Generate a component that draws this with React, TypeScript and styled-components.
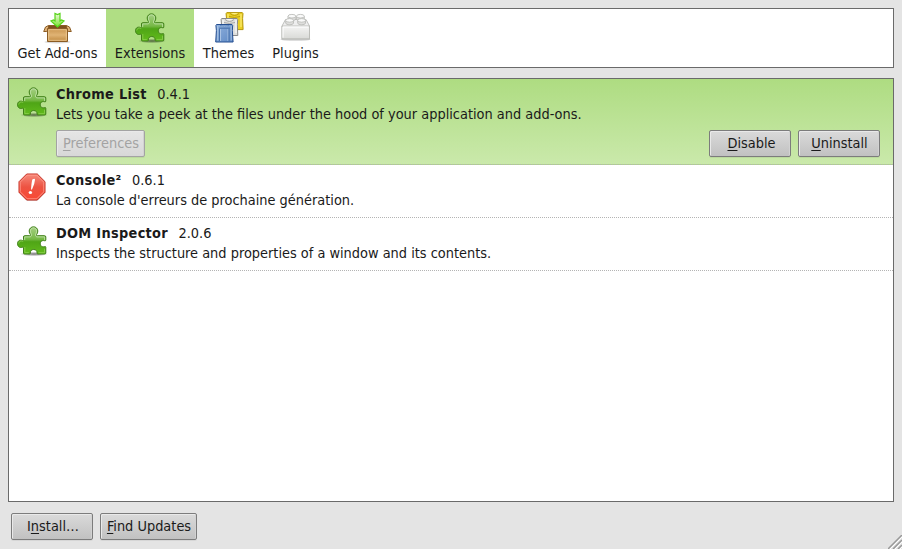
import React from "react";
import styled, { createGlobalStyle, css } from "styled-components";

const Global = createGlobalStyle`
  * { box-sizing: border-box; }
  body { margin: 0; background: #e4e4e4; }
  #root { height: 100vh; overflow: hidden; }
`;

const Window = styled.main`
  height: 100%;
  position: relative;
  display: flex;
  flex-direction: column;
  padding: 8px 8px 0;
  background: #e4e4e4;
  color: #1a1a1a;
  font: 14.4px/20px "DejaVu Sans Condensed", "DejaVu Sans", sans-serif;
  font-stretch: condensed;
  white-space: nowrap;
`;

const Toolbar = styled.nav`
  display: flex;
  height: 60px;
  border: 1px solid #6a6a6a;
  background: #fff;
`;

const Tab = styled.button<{ $width: number; $active?: boolean }>`
  display: flex;
  flex-direction: column;
  align-items: center;
  width: ${(p) => p.$width}px;
  padding: 3px 0 0;
  border: 0;
  background: ${(p) => (p.$active ? "#b0de84" : "transparent")};
  color: inherit;
  font: inherit;
  svg { display: block; flex: none; margin-bottom: -1px; }
`;

const List = styled.section`
  height: 424px;
  margin: 10px 0;
  border: 1px solid #6a6a6a;
  background: #fff;
`;

const Row = styled.article<{ $selected?: boolean }>`
  display: flex;
  height: ${(p) => (p.$selected ? 86 : 53)}px;
  padding: 5px 13px 0 7px;
  border-bottom: 1px dotted #b4b4b4;
  ${(p) =>
    p.$selected &&
    css`
      background: linear-gradient(#aedc81, #cae9ab);
    `}
`;

const RowIcon = styled.div`
  width: 40px;
  padding-top: 2px;
  svg { display: block; }
`;

const Details = styled.div`
  flex: 1;
`;

const Title = styled.div`
  display: flex;
  gap: 10.5px;
`;

const Name = styled.strong`
  font-weight: bold;
  letter-spacing: 0.3px;
`;

const Actions = styled.div`
  display: flex;
  gap: 7px;
  margin-top: 6px;
`;

const Spacer = styled.span`
  flex: 1;
`;

const Button = styled.button<{ $width: number; $indent?: number }>`
  width: ${(p) => p.$width}px;
  height: 27px;
  padding: 0 0 1px ${(p) => p.$indent ?? 0}px;
  border: 1px solid #7c7c7c;
  border-radius: 2px;
  background: linear-gradient(#dadada, #c1c1c1);
  box-shadow: inset 1px 1px #e9e9e9, inset -1px 0 #d2d2d2, 0 1px rgba(0, 0, 0, 0.06);
  color: #1a1a1a;
  font: inherit;
  text-align: center;
  &:disabled {
    border-color: #a3a3a3;
    background: linear-gradient(#e5e5e5, #d8d8d8);
    color: #a3a3a3;
  }
`;

const Key = styled.span`
  text-decoration: underline;
  text-decoration-thickness: 1px;
  text-underline-offset: 2px;
  text-decoration-skip-ink: none;
`;

const Footer = styled.footer`
  display: flex;
  gap: 7px;
  padding: 1px 3px;
`;

const Grip = styled.svg`
  position: absolute;
  right: 0;
  bottom: 0;
`;

const piece =
  "M7.500 12q0-1.300 1-1.300h5q1.300 0 .9-1.200c-.8-1-1.200-2.200-1.200-3.500a4.300 4.200 0 0 1 8.600 0c0 1.300-.4 2.500-1.200 3.500q-.4 1.200.9 1.200H28.500q1.300 0 1.300 1.300V15q0 1-1 .8c-1.500-.6-4.500-.3-4.500 2.900s3 3.500 4.500 2.900q1-.2 1 .8V28q0 1-1.300 1h-6.600q-1 0-.8-1c0-2-1-3.500-3.400-3.500s-3.400 1.500-3.400 3.500q.2 1-.8 1H8.500q-1 0-1-1v-5q0-1-1-.8c-2.500 1-5-.5-5-3.500s2.500-4.200 5-3.200q1 .2 1-.8z";

function Puzzle({ id }: { id: string }) {
  return (
    <svg width="32" height="32" viewBox="0 0 32 32">
      <defs>
        <linearGradient id={id} x1="0" y1="0" x2="0" y2="1">
          <stop offset="0" stopColor="#a5cf83" />
          <stop offset=".45" stopColor="#77b947" />
          <stop offset=".55" stopColor="#4fa516" />
          <stop offset="1" stopColor="#62bb1c" />
        </linearGradient>
        <radialGradient id={id + "s"}>
          <stop offset="0" stopColor="#000" stopOpacity=".55" />
          <stop offset="1" stopColor="#000" stopOpacity="0" />
        </radialGradient>
      </defs>
      <ellipse cx="18" cy="29" rx="14" ry="2.300" fill={`url(#${id}s)`} />
      <path d={piece} fill={`url(#${id})`} stroke="#3f7f18" />
      <path d="M8.700 15v-3.100h5.500q2-.8 1.100-2.900C13.500 6 14.700 2.900 17.500 2.900s4 3.100 2.200 6.100q-.9 2.100 1.100 2.900h7.800V15" fill="none" stroke="#cae7b4" strokeWidth=".9" opacity=".85" />
      <path d="M2.700 18.500c.2-2 2-3 4.500-2.200M8.800 22v5.600h4M22.500 27.700h6v-4" fill="none" stroke="#8dd052" strokeWidth=".8" />
    </svg>
  );
}

function BoxIcon() {
  return (
    <svg width="32" height="32" viewBox="0 0 32 32">
      <defs>
        <linearGradient id="box" x1="0" y1="0" x2="0" y2="1">
          <stop stopColor="#c8934e" />
          <stop offset=".5" stopColor="#e0b374" />
          <stop offset="1" stopColor="#bd873e" />
        </linearGradient>
        <linearGradient id="arrow" x1="0" y1="0" x2="0" y2="1">
          <stop stopColor="#effbdc" />
          <stop offset="1" stopColor="#76e32d" />
        </linearGradient>
      </defs>
      <ellipse cx="15.500" cy="30" rx="13" ry="1.500" fill="#000" opacity=".15" />
      <path d="m6.500 13.500-3 1.500-1.800 4.500h3L6.500 17m18-3.500 3 1.500 1.800 4.500h-3L24.500 17" fill="#dfb077" stroke="#8b5c24" />
      <path d="M6.500 13.500h18v4h-18z" fill="#7d5021" stroke="#8b5c24" />
      <path d="M5.500 16.500h20v13h-20z" fill="url(#box)" stroke="#8b5c24" />
      <path d="M6.700 28.300V17.700h17.600v10.600z" fill="none" stroke="#edcc97" strokeWidth=".8" />
      <path d="M13 1.500v7.500l-1.500-1L9 9l6.500 6L22 9l-2.500-1-1.500 1V1.500l-2.500 1z" fill="url(#arrow)" stroke="#55d317" strokeWidth="1.200" />
    </svg>
  );
}

function ThemesIcon() {
  return (
    <svg width="32" height="32" viewBox="0 0 32 32">
      <defs>
        <linearGradient id="blue" x1="0" y1="0" x2="1" y2="1">
          <stop stopColor="#90b1dc" />
          <stop offset="1" stopColor="#5e89c5" />
        </linearGradient>
      </defs>
      <path d="M13.800.6h15.500l.7 1-.4 5 .5 11H13l.5-11-.4-5z" fill="#ebd023" stroke="#b5960b" />
      <path d="M15 2v13m13-13v13" stroke="#fff184" />
      <path d="M17 1.500q4.500 4 9 0M16 4.500q5.500 2 11 0" fill="none" stroke="#b5960b" strokeWidth=".8" />
      <path d="M18 1.300h7q-3.500 2-7 0" fill="#fff7ac" />
      <path d="M8.700 6.500H24l.7 1-.4 5 .5 11H8l.5-11-.4-5z" fill="#dededc" stroke="#898989" />
      <path d="M10 8v13M23 8v13" stroke="#fff" />
      <path d="M12 7.500q4.500 4 9 0M11 10.500q5.500 2 11 0" fill="none" stroke="#999" strokeWidth=".8" />
      <path d="M13 7.300h7q-3.500 2-7 0" fill="#fff" />
      <path d="M3.500 12.500H19l.7 1-.4 5 .8 11.500H2.700l.7-11.500-.5-5z" fill="url(#blue)" stroke="#254f91" />
      <path d="M4.700 14v14.500m13.500-14.500v14.500M7.500 17v12M15 17v12" fill="none" stroke="#b6cde9" strokeWidth=".8" />
      <path d="M6 16.200h11M6.500 17v12M16 17v12" fill="none" stroke="#37629f" strokeWidth=".8" />
      <path d="M7 13.500h9q-4.500 2.500-9 0" fill="#b6cde9" stroke="#557fb8" strokeWidth=".5" />
    </svg>
  );
}

function PluginIcon() {
  return (
    <svg width="32" height="32" viewBox="0 0 32 32">
      <defs>
        <linearGradient id="brick" x1="0" y1="0" x2="0" y2="1">
          <stop stopColor="#f4f4f3" />
          <stop offset="1" stopColor="#d9dad7" />
        </linearGradient>
      </defs>
      <ellipse cx="15.500" cy="27.500" rx="15" ry="1.300" fill="#000" opacity=".18" />
      <path d="M5.500 7.500 2 14v13h27.500V14L26 7.500z" fill="#eee" stroke="#b8b9b5" strokeWidth=".9" />
      <path d="M2 14h27.500v12.800H2z" fill="url(#brick)" stroke="#b9bab6" strokeWidth=".9" />
      <path d="M3 25.700V15h25.500" fill="none" stroke="#fff" />
      {[[8, 2.300], [16.500, 2.300], [5.700, 6.500], [17.700, 6.500]].map(([x, y]) => (
        <g key={`${x}-${y}`} stroke="#b5b6b2" strokeWidth=".8">
          <path d={`M${x} ${y + 2}v2.500c0 2.300 7.800 2.300 7.800 0V${y + 2}`} fill="#dededc" />
          <ellipse cx={x + 3.900} cy={y + 1.900} rx="3.900" ry="1.800" fill="#fafafa" />
        </g>
      ))}
    </svg>
  );
}

function ErrorIcon() {
  return (
    <svg width="32" height="32" viewBox="0 0 32 32">
      <defs>
        <linearGradient id="stop" x1="0" y1="0" x2="0" y2="1">
          <stop stopColor="#f58a7c" />
          <stop offset=".5" stopColor="#ed5342" />
          <stop offset="1" stopColor="#fa4934" />
        </linearGradient>
      </defs>
      <path d="M11 3h10l8 8v10l-8 8H11l-8-8V11z" fill="#000" opacity=".18" />
      <path d="M10.700 2h10.600L29 9.700v10.600L21.300 28H10.700L3 20.300V9.700z" fill="url(#stop)" stroke="#c52d20" />
      <path d="M11.200 3.200h9.600l7 7v9.600l-7 7h-9.600l-7-7v-9.600z" fill="none" stroke="#ff9a8b" strokeWidth=".9" />
      <path d="M16.300 7.500q2.700-1.500 2.700.2-.2 4-3 9.800h-1q.3-6 1.300-10z" fill="#fff" />
      <ellipse cx="14.400" cy="20.500" rx="1.700" ry="1.600" fill="#fff" />
    </svg>
  );
}

const addons = [
  { name: "Chrome List", version: "0.4.1", text: "Lets you take a peek at the files under the hood of your application and add-ons.", icon: <Puzzle id="chrome" />, selected: true },
  { name: "Console²", version: "0.6.1", text: "La console d'erreurs de prochaine génération.", icon: <ErrorIcon /> },
  { name: "DOM Inspector", version: "2.0.6", text: "Inspects the structure and properties of a window and its contents.", icon: <Puzzle id="dom" /> },
];

export default function App() {
  return (
    <>
      <Global />
      <Window>
        <Toolbar>
          <Tab $width={97}><BoxIcon />Get Add-ons</Tab>
          <Tab $width={88} $active><Puzzle id="tab" />Extensions</Tab>
          <Tab $width={69}><ThemesIcon />Themes</Tab>
          <Tab $width={65}><PluginIcon />Plugins</Tab>
        </Toolbar>
        <List>
          {addons.map((a) => (
            <Row key={a.name} $selected={a.selected}>
              <RowIcon>{a.icon}</RowIcon>
              <Details>
                <Title><Name>{a.name}</Name><span>{a.version}</span></Title>
                <div>{a.text}</div>
                {a.selected && (
                  <Actions>
                    <Button $width={89} $indent={1} disabled><Key>P</Key>references</Button>
                    <Spacer />
                    <Button $width={82} $indent={3}><Key>D</Key>isable</Button>
                    <Button $width={82} $indent={1}><Key>U</Key>ninstall</Button>
                  </Actions>
                )}
              </Details>
            </Row>
          ))}
        </List>
        <Footer>
          <Button $width={82} $indent={2}>I<Key>n</Key>stall…</Button>
          <Button $width={97} $indent={1}><Key>F</Key>ind Updates</Button>
        </Footer>
        <Grip width="14" height="14" viewBox="0 0 14 14" fill="none">
          <path d="M0 14 14 0M5 14l9-9M10 14l4-4" stroke="#999" strokeWidth="1.500" />
          <path d="M2 14 14 2M7 14l7-7M12 14l2-2" stroke="#fff" />
        </Grip>
      </Window>
    </>
  );
}
